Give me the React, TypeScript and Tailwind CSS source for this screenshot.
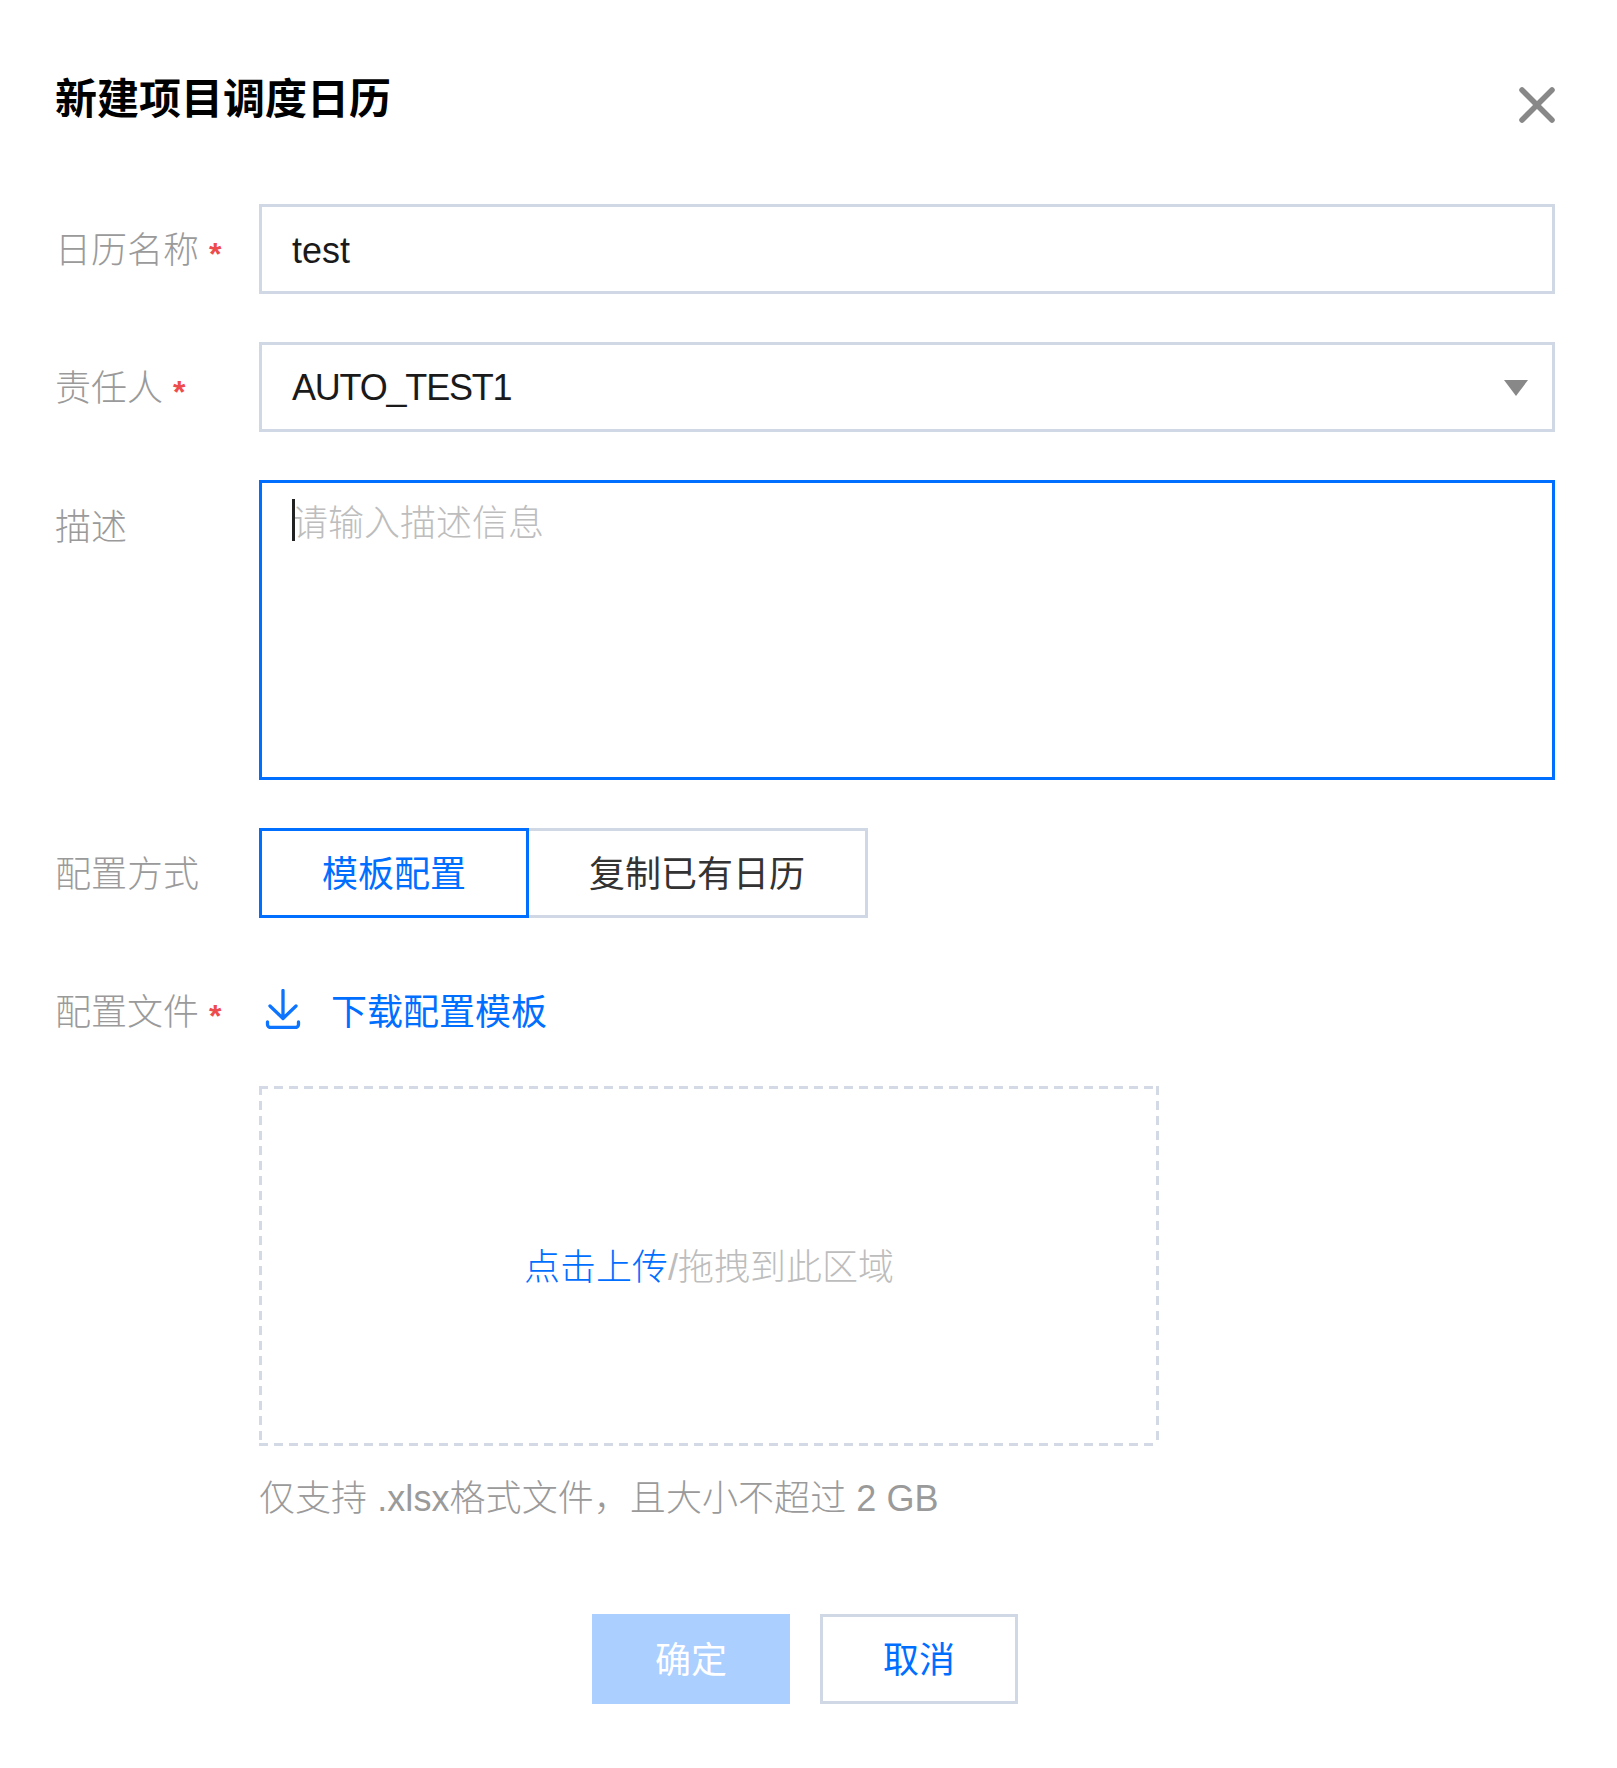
export default function App() {
  const font = "font-['Liberation_Sans','Noto_Sans_CJK_SC',sans-serif]";
  const Star = () => (
    <span className="text-[#ee4c4c] text-[32px] leading-[32px] font-bold ml-[10px] relative top-[3px]">*</span>
  );
  const Label = ({ text, star, pad = "pt-[4px]" }: { text: string; star?: boolean; pad?: string }) => (
    <div className={`${pad} w-[204px] shrink-0 flex items-center text-[36px] leading-[50px] text-[#9a9a9a] font-light whitespace-nowrap`}>
      {text}
      {star && <Star />}
    </div>
  );
  return (
    <div className={`${font} w-[1617px] h-[1768px] bg-white pl-[55px] pr-[62px]`}>
      <div className="h-[204px] flex justify-between items-start pt-[75px]">
        <h1 className="text-[42px] leading-[50px] font-bold text-black">新建项目调度日历</h1>
        <svg width="36" height="36" viewBox="0 0 36 36" className="mt-[12px]" fill="none" stroke="#888888" strokeWidth="5.5" strokeLinecap="round">
          <path d="M3 3 L33 33 M33 3 L3 33" />
        </svg>
      </div>

      <div className="flex h-[90px] items-center">
        <Label text="日历名称" star />
        <div className="flex-1 h-full border-[3px] border-[#d0d8e5] flex items-center pl-[30px] pt-[3px] text-[36px] text-[#1a1a1a]">test</div>
      </div>

      <div className="flex h-[90px] items-center mt-[48px]">
        <Label text="责任人" star />
        <div className="flex-1 h-full border-[3px] border-[#d0d8e5] flex items-center justify-between pl-[30px] pr-[24px] text-[36px] tracking-[-1.2px] text-[#1a1a1a]">
          <span className="pt-[2px]">AUTO_TEST1</span>
          <svg width="24" height="16" viewBox="0 0 24 16" fill="#888888" className="mt-[1px]"><path d="M0 0 H24 L12 16 Z" /></svg>
        </div>
      </div>

      <div className="flex h-[300px] mt-[48px]">
        <div className="pt-[19px]"><Label text="描述" /></div>
        <div className="relative flex-1 h-full border-[3px] border-[#006eff] pl-[30px] pt-[16px] text-[36px] leading-[50px] text-[#bdbdbd] font-light">
          请输入描述信息
          <div className="absolute left-[30px] top-[16px] w-[3px] h-[42px] bg-[#222222]" />
        </div>
      </div>

      <div className="flex h-[90px] items-center mt-[48px]">
        <Label text="配置方式" />
        <div className="flex h-full text-[36px]">
          <div className="w-[270px] border-[3px] border-[#006eff] text-[#006eff] flex items-center justify-center pt-[4px]">模板配置</div>
          <div className="w-[339px] border-[3px] border-l-0 border-[#d0d8e5] text-[#333333] flex items-center justify-center pt-[4px]">复制已有日历</div>
        </div>
      </div>

      <div className="flex h-[50px] items-center mt-[70px]">
        <Label text="配置文件" star pad="pt-0" />
        <div className="flex items-center text-[#006eff] text-[36px] pl-[6px]">
          <svg width="36" height="40" viewBox="0 0 36 40" className="mb-[8px]" fill="none" stroke="#0d74ff" strokeWidth="3.3" strokeLinecap="round" strokeLinejoin="round">
            <path d="M18 1.5 V29.5 M5 17 L18 29.5 L31 17 M2.5 33 V35.5 A3 3 0 0 0 5.5 38.5 H30.5 A3 3 0 0 0 33.5 35.5 V33" />
          </svg>
          <span className="ml-[30px]">下载配置模板</span>
        </div>
      </div>

      <div className="pl-[204px] mt-[48px]">
        <div className="w-[900px] h-[360px] pt-[3px] bg-no-repeat bg-[repeating-linear-gradient(90deg,#d3d9e5_0_9px,transparent_9px_15px),repeating-linear-gradient(90deg,#d3d9e5_0_9px,transparent_9px_15px),repeating-linear-gradient(180deg,#d3d9e5_0_9px,transparent_9px_15px),repeating-linear-gradient(180deg,#d3d9e5_0_9px,transparent_9px_15px)] [background-size:100%_3px,100%_3px,3px_100%,3px_100%] [background-position:0_0,0_100%,0_0,100%_0] flex items-center justify-center text-[36px] font-light text-[#bdbdbd]">
          <span className="text-[#006eff]">点击上传</span>/拖拽到此区域
        </div>
        <div className="mt-[28px] text-[36px] leading-[50px] tracking-[0.06px] text-[#9a9a9a] font-light">仅支持 .xlsx格式文件，且大小不超过 2 GB</div>
      </div>

      <div className="flex ml-[537px] mt-[90px]">
        <div className="w-[198px] h-[90px] bg-[#abcfff] text-white text-[36px] flex items-center justify-center pt-[4px]">确定</div>
        <div className="w-[198px] h-[90px] ml-[30px] border-[3px] border-[#d0d8e5] text-[#006eff] text-[36px] flex items-center justify-center pt-[4px]">取消</div>
      </div>
    </div>
  );
}
